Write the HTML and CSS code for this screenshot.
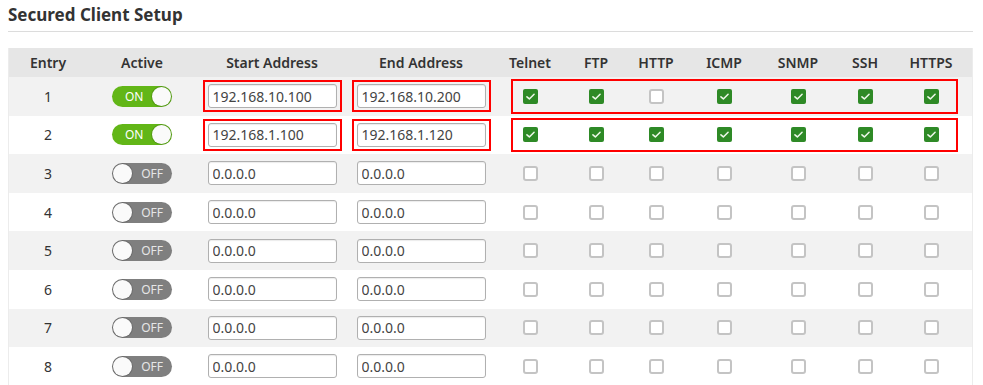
FILE: index.html
```html
<!DOCTYPE html>
<html lang="en">
<head>
    <meta charset="UTF-8">
    <meta name="viewport" content="width=device-width, initial-scale=1.0">
    <title>Secured Client Setup</title>
    <link rel="stylesheet" href="styles.css">
</head>
<body>
    <div class="panel">
        <h2 class="title">Secured Client Setup</h2>
        <div class="client-table" id="client-table">
            <div class="row head">
                <div class="cell">Entry</div>
                <div class="cell">Active</div>
                <div class="cell">Start Address</div>
                <div class="cell">End Address</div>
                <div class="checks">
                    <div class="cell">Telnet</div>
                    <div class="cell">FTP</div>
                    <div class="cell">HTTP</div>
                    <div class="cell">ICMP</div>
                    <div class="cell">SNMP</div>
                    <div class="cell">SSH</div>
                    <div class="cell">HTTPS</div>
                </div>
            </div>
        </div>
    </div>

    <script>
        const entries = [
            { on: true, start: '192.168.10.100', end: '192.168.10.200', svc: [1, 1, 0, 1, 1, 1, 1], mark: true },
            { on: true, start: '192.168.1.100', end: '192.168.1.120', svc: [1, 1, 1, 1, 1, 1, 1], mark: true },
            { on: false, start: '0.0.0.0', end: '0.0.0.0', svc: [0, 0, 0, 0, 0, 0, 0] },
            { on: false, start: '0.0.0.0', end: '0.0.0.0', svc: [0, 0, 0, 0, 0, 0, 0] },
            { on: false, start: '0.0.0.0', end: '0.0.0.0', svc: [0, 0, 0, 0, 0, 0, 0] },
            { on: false, start: '0.0.0.0', end: '0.0.0.0', svc: [0, 0, 0, 0, 0, 0, 0] },
            { on: false, start: '0.0.0.0', end: '0.0.0.0', svc: [0, 0, 0, 0, 0, 0, 0] },
            { on: false, start: '0.0.0.0', end: '0.0.0.0', svc: [0, 0, 0, 0, 0, 0, 0] }
        ];

        const table = document.getElementById('client-table');
        const tick = '<svg viewBox="0 0 16 16" width="13" height="13"><path d="M3.6 8.4 L6.6 11 L12.4 5.2" fill="none" stroke="#eef8ea" stroke-width="1.9" stroke-linecap="round" stroke-linejoin="round"/></svg>';

        function addressField(value, mark) {
            const input = `<input class="addr" type="text" value="${value}">`;
            return mark ? `<span class="marked">${input}</span>` : input;
        }

        entries.forEach((e, i) => {
            const row = document.createElement('div');
            row.className = 'row';
            const boxes = e.svc.map(v =>
                `<div class="cell"><span class="box${v ? ' checked' : ''}">${v ? tick : ''}</span></div>`
            ).join('');
            row.innerHTML = `
                <div class="cell">${i + 1}</div>
                <div class="cell">
                    <span class="toggle ${e.on ? 'on' : 'off'}">
                        <span class="label">${e.on ? 'ON' : 'OFF'}</span>
                        <span class="knob"></span>
                    </span>
                </div>
                <div class="cell">${addressField(e.start, e.mark)}</div>
                <div class="cell">${addressField(e.end, e.mark)}</div>
                <div class="checks${e.mark ? ' group-marked' : ''}">${boxes}</div>`;
            table.appendChild(row);
        });
    </script>
</body>
</html>
```

FILE: styles.css
```css
body {
    margin: 0;
    padding: 0 8px;
    background-color: #ffffff;
    color: #333333;
    font-family: "Noto Sans", "Open Sans", sans-serif;
}
.panel {
    width: 965px;
}
.title {
    margin: 0;
    padding: 4px 0 5px;
    font-size: 17px;
    line-height: 22px;
    font-weight: bold;
    color: #333;
    border-bottom: 1px solid #dcdcdc;
}
.client-table {
    margin-top: 16px;
    border-left: 1px solid #ececec;
    border-right: 1px solid #ececec;
}
.row {
    display: grid;
    grid-template-columns: 78px 110px 150px 148px 1fr;
    height: 38.6px;
    align-items: center;
}
.row:nth-child(even) {
    background-color: #f2f2f2;
}
.row.head {
    height: 29px;
    background-color: #e6e6e6;
    font-weight: 600;
    font-size: 14px;
    color: #333;
}
.cell {
    text-align: center;
    font-size: 14px;
    display: flex;
    justify-content: center;
    align-items: center;
}
.checks {
    position: relative;
    display: grid;
    grid-template-columns: 70px 62px 58px 78px 70px 64px 68px;
    height: 100%;
    align-items: center;
}
.group-marked::after {
    content: "";
    position: absolute;
    left: 16px;
    right: 14px;
    top: 2px;
    bottom: 2px;
    border: 2px solid #ff0000;
    pointer-events: none;
}
.marked {
    display: inline-block;
    border: 2px solid #ff0000;
    padding: 2px 3px;
    line-height: 0;
}
.addr {
    box-sizing: border-box;
    width: 129px;
    height: 24px;
    padding: 0 4px;
    border: 1px solid #b0b0b0;
    border-radius: 3px;
    box-shadow: inset 0 1px 1px rgba(0, 0, 0, 0.08);
    font-family: "Noto Sans", "Open Sans", sans-serif;
    font-size: 14px;
    color: #444;
    background: #fff;
}
.toggle {
    position: relative;
    display: inline-flex;
    align-items: center;
    width: 60px;
    height: 21px;
    border-radius: 11px;
    font-size: 12px;
    box-sizing: border-box;
}
.toggle.on {
    background-color: #62b617;
    color: #ffffff;
    justify-content: flex-start;
    padding-left: 13px;
}
.toggle.off {
    background-color: #7f7f7f;
    color: #e6e6e6;
    justify-content: flex-end;
    padding-right: 9px;
}
.knob {
    position: absolute;
    top: 1px;
    width: 19px;
    height: 19px;
    border-radius: 50%;
    background: #fafafa;
    box-shadow: 0 0 0 1px rgba(0, 0, 0, 0.15);
}
.toggle.on .knob {
    right: 1px;
}
.toggle.off .knob {
    left: 1px;
}
.box {
    box-sizing: border-box;
    width: 15px;
    height: 15px;
    border: 2px solid #c4c4c4;
    border-radius: 3px;
    background: #ffffff;
    display: flex;
    align-items: center;
    justify-content: center;
}
.box.checked {
    border: none;
    background-color: #2e8a26;
    border-radius: 2px;
}
```
